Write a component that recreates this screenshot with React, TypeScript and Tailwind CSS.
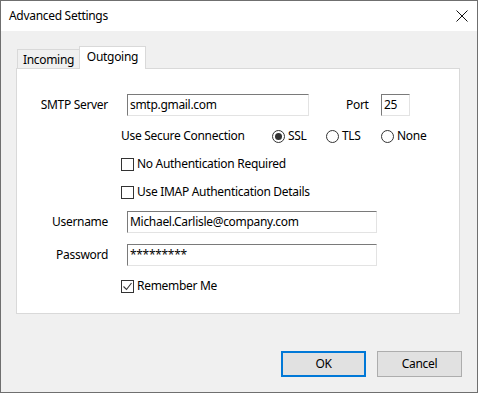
import React from "react";

const font = { fontFamily: '"Noto Sans", "Segoe UI", sans-serif' };

function TextBox({ value, width }: { value: string; width: string }) {
  return (
    <div
      className={`${width} h-[22px] bg-white border border-t-[#7a7a7a] border-l-[#7a7a7a] border-r-[#e3e3e3] border-b-[#e3e3e3] pl-[2px] flex items-center text-[12px] leading-none text-black whitespace-nowrap overflow-hidden`}
    >
      {value}
    </div>
  );
}

function CheckBox({ label, checked }: { label: string; checked?: boolean }) {
  return (
    <div className="flex items-center gap-[3px] h-[16px]">
      <div className="w-[13px] h-[13px] bg-white border border-[#333333] flex items-center justify-center">
        {checked && (
          <svg width="11" height="11" viewBox="0 0 11 11" fill="none">
            <path d="M1.5 5.5l3 3 5-6.5" stroke="#333" strokeWidth="1.1" />
          </svg>
        )}
      </div>
      <span>{label}</span>
    </div>
  );
}

function Radio({ label, checked }: { label: string; checked?: boolean }) {
  return (
    <div className="flex items-center gap-[3px] h-[16px]">
      <div className="w-[13px] h-[13px] rounded-full bg-white border border-[#333333] flex items-center justify-center">
        {checked && <div className="w-[7px] h-[7px] rounded-full bg-[#333333]" />}
      </div>
      <span>{label}</span>
    </div>
  );
}

export default function App() {
  return (
    <div
      className="w-[478px] h-[393px] border border-[#6f6f6f] bg-[#f0f0f0] flex flex-col text-[12px] tracking-[-0.3px] text-black"
      style={font}
    >
      {/* Title bar */}
      <div className="h-[30px] bg-white flex items-center justify-between pl-[8px] pr-[9px]">
        <span className="text-[12px]">Advanced Settings</span>
        <svg width="12" height="12" viewBox="0 0 12 12" fill="none">
          <path d="M0.5 0.5l11 11M11.5 0.5l-11 11" stroke="#111" strokeWidth="1" />
        </svg>
      </div>

      {/* Body */}
      <div className="flex-1 flex flex-col pt-[15px] pl-[15px] pr-[15px]">
        {/* Tabs */}
        <div className="flex items-end h-[22px] pl-px">
          <div className="w-[63px] h-[19px] border border-b-0 border-[#d9d9d9] bg-[#f0f0f0] flex items-center justify-center pt-px">
            Incoming
          </div>
          <div className="relative z-10 -ml-px -mb-px w-[67px] h-[23px] border border-b-0 border-[#d9d9d9] bg-white flex items-center justify-center pb-[2px]">
            Outgoing
          </div>
        </div>

        {/* Panel */}
        <div className="w-[444px] h-[246px] bg-white border border-[#d9d9d9] pt-[25px]">
          <div className="flex items-center">
            <div className="w-[110px] pr-[19px] text-right">SMTP Server</div>
            <TextBox value="smtp.gmail.com" width="w-[182px]" />
            <div className="ml-[37px] w-[35px]">Port</div>
            <TextBox value="25" width="w-[29px]" />
          </div>

          <div className="flex items-center mt-[12px] h-[16px] pl-[104px]">
            <span className="w-[151px]">Use Secure Connection</span>
            <div className="w-[54px]">
              <Radio label="SSL" checked />
            </div>
            <div className="w-[55px]">
              <Radio label="TLS" />
            </div>
            <Radio label="None" />
          </div>

          <div className="mt-[12px] pl-[104px]">
            <CheckBox label="No Authentication Required" />
          </div>
          <div className="mt-[12px] pl-[104px]">
            <CheckBox label="Use IMAP Authentication Details" />
          </div>

          <div className="flex items-center mt-[11px]">
            <div className="w-[110px] pr-[19px] text-right">Username</div>
            <TextBox value="Michael.Carlisle@company.com" width="w-[250px]" />
          </div>
          <div className="flex items-center mt-[11px]">
            <div className="w-[110px] pr-[19px] text-right">Password</div>
            <TextBox value="*********" width="w-[250px]" />
          </div>

          <div className="mt-[12px] pl-[104px]">
            <CheckBox label="Remember Me" checked />
          </div>
        </div>

        {/* Buttons */}
        <div className="flex justify-end gap-[11px] mt-[37px]">
          <button className="w-[85px] h-[26px] bg-[#e1e1e1] border-2 border-[#0078d7] text-[12px]">
            OK
          </button>
          <button className="w-[85px] h-[26px] bg-[#e1e1e1] border border-[#adadad] text-[12px]">
            Cancel
          </button>
        </div>
      </div>
    </div>
  );
}
